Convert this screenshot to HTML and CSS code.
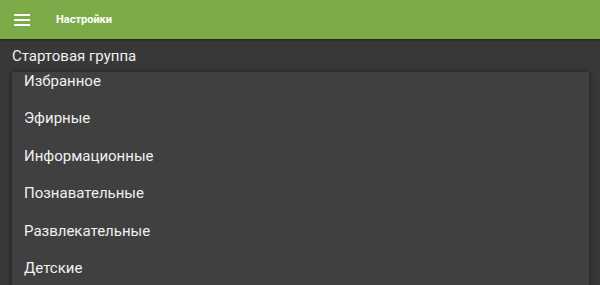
FILE: index.html
```html
<!DOCTYPE html>
<html lang="ru">
<head>
    <meta charset="UTF-8">
    <title>Настройки</title>
    <link rel="stylesheet" href="styles.css">
</head>
<body>
    <div class="toolbar">
        <svg class="menu-icon" width="16" height="12" viewBox="0 0 16 12">
            <rect x="0" y="0" width="16" height="2" fill="#fff"/>
            <rect x="0" y="5" width="16" height="2" fill="#fff"/>
            <rect x="0" y="10" width="16" height="2" fill="#fff"/>
        </svg>
        <span class="title">Настройки</span>
    </div>
    <div class="content">
        <div class="pref-title">Стартовая группа</div>
        <div class="popup">
            <!-- список прокручен немного вниз -->
            <div class="list">
                <div class="item">Избранное</div>
                <div class="item">Эфирные</div>
                <div class="item">Информационные</div>
                <div class="item">Познавательные</div>
                <div class="item">Развлекательные</div>
                <div class="item">Детские</div>
            </div>
        </div>
    </div>
</body>
</html>
```

FILE: styles.css
```css
* {
    margin: 0;
    padding: 0;
    box-sizing: border-box;
    font-family: Roboto, 'Liberation Sans', sans-serif;
}

body {
    width: 600px;
    height: 285px;
    background: #383838;
    overflow: hidden;
    color: #f0f0f0;
}

.toolbar {
    height: 39px;
    background: #7cab48;
    display: flex;
    align-items: center;
    padding-left: 14px;
    box-shadow: 0 1px 2px rgba(0, 0, 0, 0.4);
    position: relative;
    z-index: 1;
}

.menu-icon {
    display: block;
}

.title {
    margin-left: 26px;
    font-size: 11px;
    font-weight: bold;
    color: #fff;
}

.content {
    padding: 7px 11px 0 12px;
}

.pref-title {
    font-size: 15px;
    line-height: 20px;
    margin-bottom: 6px;
}

.popup {
    background: #404040;
    box-shadow: 0 0 6px rgba(0, 0, 0, 0.45);
    padding-left: 12px;
    height: 220px;
    overflow: hidden;
}

.list {
    margin-top: -10px;
}

.item {
    height: 37.5px;
    font-size: 15px;
    display: flex;
    align-items: center;
}
```
